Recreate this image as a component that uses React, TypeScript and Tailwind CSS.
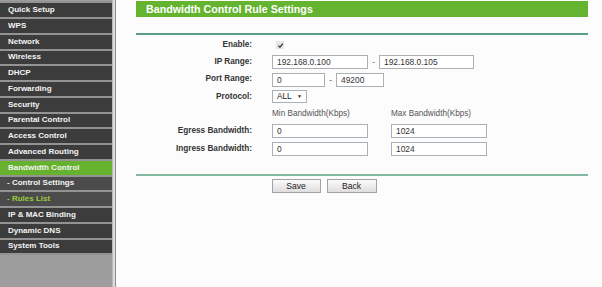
import React from "react";

const menu: { label: string; kind: "main" | "active" | "sub" | "subActive" }[] = [
  { label: "Quick Setup", kind: "main" },
  { label: "WPS", kind: "main" },
  { label: "Network", kind: "main" },
  { label: "Wireless", kind: "main" },
  { label: "DHCP", kind: "main" },
  { label: "Forwarding", kind: "main" },
  { label: "Security", kind: "main" },
  { label: "Parental Control", kind: "main" },
  { label: "Access Control", kind: "main" },
  { label: "Advanced Routing", kind: "main" },
  { label: "Bandwidth Control", kind: "active" },
  { label: "- Control Settings", kind: "sub" },
  { label: "- Rules List", kind: "subActive" },
  { label: "IP & MAC Binding", kind: "main" },
  { label: "Dynamic DNS", kind: "main" },
  { label: "System Tools", kind: "main" },
];

function Input({ value, w }: { value: string; w: string }) {
  return (
    <div
      className={`${w} h-[14px] border border-[#a9b0b6] bg-white pl-[4px] text-[8.4px] leading-[12px] text-[#333]`}
    >
      {value}
    </div>
  );
}

function Row({ label, children }: { label: string; children?: React.ReactNode }) {
  return (
    <div className="flex h-[14px] items-center">
      <div className="w-[116px] text-right text-[8.2px] font-bold text-[#333]">{label}</div>
      <div className="ml-[20px] flex items-center">{children}</div>
    </div>
  );
}

function Dash() {
  return <div className="w-[11px] text-center text-[8px] text-[#333]">-</div>;
}

export default function App() {
  return (
    <div
      className="flex h-[287px] w-[602px] overflow-hidden bg-[#fcfcfd]"
      style={{ fontFamily: '"Liberation Sans", Arial, sans-serif' }}
    >
      {/* Sidebar */}
      <div className="flex h-full">
        <div className="flex w-[112px] flex-col bg-[#9d9d9d] pt-[1.25px]">
          {menu.map((m) => {
            const bg =
              m.kind === "active"
                ? "bg-[#66b22e]"
                : m.kind === "sub" || m.kind === "subActive"
                ? "bg-[#4b4b4b]"
                : "bg-[#3c3c3c]";
            const color = m.kind === "subActive" ? "text-[#9ccc3c]" : "text-[#f4f4f4]";
            return (
              <div key={m.label} className="h-[15.75px] border-t-2 border-[#939393]">
                <div
                  className={`flex h-full items-center pl-[8px] text-[8px] font-bold ${bg} ${color}`}
                >
                  {m.kind === "sub" || m.kind === "subActive" ? (
                    <span className="-ml-[1px]">{m.label}</span>
                  ) : (
                    m.label
                  )}
                </div>
              </div>
            );
          })}
          <div className="h-[2px] bg-[#939393]" />
        </div>
        <div className="w-[1px] bg-[#b8b8b8]" />
        <div className="w-[1.5px] bg-[#dcdcdc]" />
        <div className="w-[1px] bg-[#8e8e8e]" />
      </div>

      {/* Main */}
      <div className="flex-1 pl-[20.5px]">
        <div className="w-[452px]">
          <div className="mt-[1px] flex h-[15.5px] items-center bg-[#64b42f] pl-[10px] text-[10.7px] font-bold text-white">
            Bandwidth Control Rule Settings
          </div>
          <div className="mt-[16.5px] h-[2px] bg-[#5c9e83]" />

          <div className="mt-[3px] flex flex-col gap-[3.3px]">
            <Row label="Enable:">
              <div className="ml-[4px] flex h-[8px] w-[8px] items-center justify-center rounded-[1px] bg-[#e6e6e6]">
                <svg width="7" height="7" viewBox="0 0 10 10">
                  <path d="M2 5.2 L4.2 7.6 L8.2 2.4" fill="none" stroke="#333" strokeWidth="1.8" />
                </svg>
              </div>
            </Row>
            <Row label="IP Range:">
              <Input value="192.168.0.100" w="w-[96px]" />
              <Dash />
              <Input value="192.168.0.105" w="w-[95px]" />
            </Row>
            <Row label="Port Range:">
              <Input value="0" w="w-[53px]" />
              <Dash />
              <Input value="49200" w="w-[48px]" />
            </Row>
            <Row label="Protocol:">
              <div className="flex h-[13px] w-[35px] items-center justify-between border border-[#a9b0b6] bg-white pl-[4px] pr-[4px] text-[8.2px] text-[#222]">
                <span>ALL</span>
                <span className="text-[5px]">▼</span>
              </div>
            </Row>
            <Row label="">
              <div className="w-[119px] text-[8.2px] text-[#555]">Min Bandwidth(Kbps)</div>
              <div className="text-[8.2px] text-[#555]">Max Bandwidth(Kbps)</div>
            </Row>
            <Row label="Egress Bandwidth:">
              <Input value="0" w="w-[96px]" />
              <div className="w-[23px]" />
              <Input value="1024" w="w-[96px]" />
            </Row>
            <Row label="Ingress Bandwidth:">
              <Input value="0" w="w-[96px]" />
              <div className="w-[23px]" />
              <Input value="1024" w="w-[96px]" />
            </Row>
          </div>

          <div className="mt-[18px] h-[2px] bg-[#84b9a1]" />

          <div className="mt-[3px] flex gap-[6px] pl-[135.5px]">
            <button className="h-[14px] w-[49px] border border-[#a3a3a3] bg-gradient-to-b from-[#fbfbfb] to-[#dedede] text-[8.6px] leading-[12px] text-[#222]">
              Save
            </button>
            <button className="h-[14px] w-[50px] border border-[#a3a3a3] bg-gradient-to-b from-[#fbfbfb] to-[#dedede] text-[8.6px] leading-[12px] text-[#222]">
              Back
            </button>
          </div>
        </div>
      </div>
    </div>
  );
}
